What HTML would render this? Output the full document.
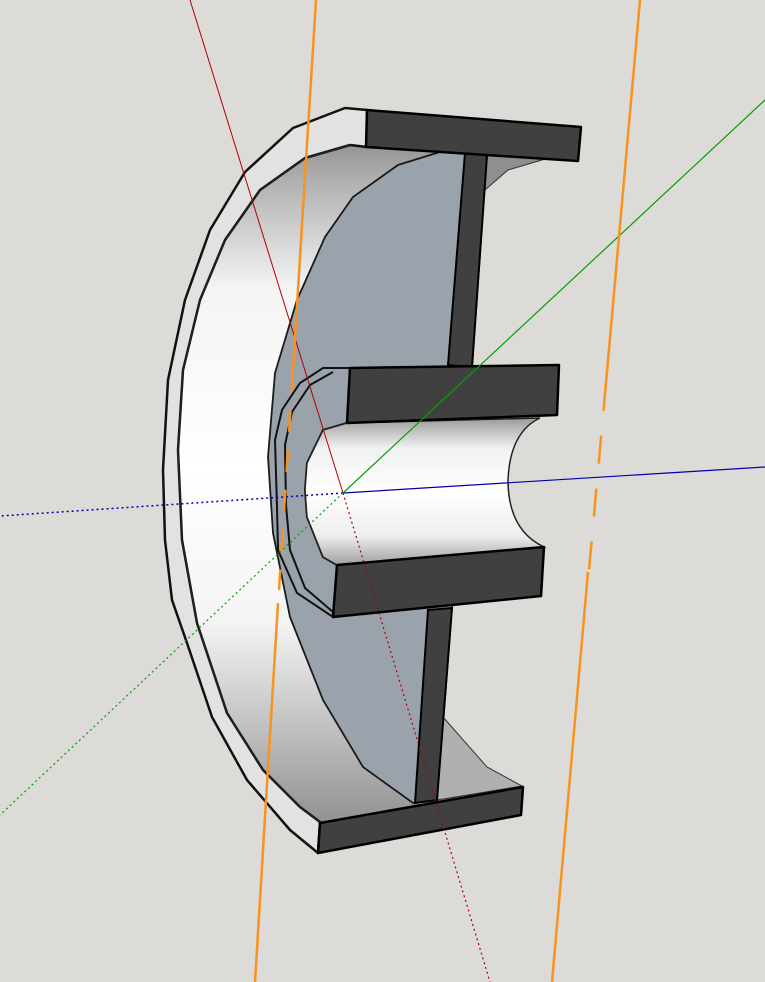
<!DOCTYPE html>
<html><head><meta charset="utf-8"><style>html,body{margin:0;padding:0;background:#dcdbd7}svg{display:block}</style></head>
<body>
<svg width="765" height="982" viewBox="0 0 765 982" xmlns="http://www.w3.org/2000/svg">
<defs>
<linearGradient id="rim" x1="0" y1="0" x2="0" y2="1">
<stop offset="0" stop-color="#7a7a7a"/><stop offset="0.1" stop-color="#b0b0b0"/><stop offset="0.25" stop-color="#f4f4f4"/><stop offset="0.5" stop-color="#ffffff"/><stop offset="0.72" stop-color="#f4f4f4"/><stop offset="0.88" stop-color="#bcbcbc"/><stop offset="1" stop-color="#929292"/>
</linearGradient>
<linearGradient id="cyl" x1="0" y1="0" x2="0" y2="1">
<stop offset="0" stop-color="#9a9a9a"/><stop offset="0.2" stop-color="#f0f0f0"/><stop offset="0.5" stop-color="#ffffff"/><stop offset="0.8" stop-color="#eeeeee"/><stop offset="1" stop-color="#a0a0a0"/>
</linearGradient>
</defs>
<rect width="765" height="982" fill="#dcdbd7"/>
<path d="M350,145 L305,158 L260,190 L225,240 L200,300 L183,370 L178,450 L182,540 L197,623 L227,713 L263,770 L300,807 L320,822 L523,787 L487,767 L443,717 L440,160 L550,160 L580,128 L367,110 Z" fill="url(#rim)"/>
<path d="M345,108 L293,128 L245,172 L210,230 L185,300 L168,380 L163,470 L165,540 L172,600 L187,643 L212,717 L247,780 L290,830 L318,853 L320,822 L300,807 L263,770 L227,713 L197,623 L182,540 L178,450 L183,370 L200,300 L225,240 L260,190 L305,158 L350,145 L367,147 L367,110 Z" fill="#e2e2e2" stroke="#111" stroke-width="2.5" stroke-linejoin="round"/>
<path d="M350,145 L305,158 L260,190 L225,240 L200,300 L183,370 L178,450 L182,540 L197,623 L227,713 L263,770 L300,807 L320,822" fill="none" stroke="#222" stroke-width="1.5"/>
<path d="M487,155 L552,157 L508,170 L485,190 Z" fill="#8f8f8f" stroke="#333" stroke-width="1"/>
<path d="M440,152 L398,165 L353,197 L325,237 L297,300 L275,373 L268,457 L273,533 L290,617 L323,700 L363,767 L413,803 L437,800 L452,608 L472,367 L487,155 Z" fill="#9aa3ab" stroke="#1a1a1a" stroke-width="1.8"/>
<path d="M443,717 L487,767 L522,786 L437,800 Z" fill="#b0b0b0" stroke="#333" stroke-width="1"/>
<path d="M350,368 L323,368 L300,383 L282,410 L275,440 L277,507 L278,550 L297,593 L333,617 L337,565 L323,557 L307,517 L305,490 L307,463 L323,430 L347,423 Z" fill="#9aa3ab" stroke="#111" stroke-width="2"/>
<path d="M333,372 L310,385 L292,412 L285,445 L286,505 L290,550 L305,588 L333,612" fill="none" stroke="#111" stroke-width="2"/>
<path d="M347,423 L323,430 L307,463 L305,490 L307,517 L323,557 L337,565 L544,547 Q508,530 508,480 Q510,432 540,418 Z" fill="url(#cyl)" stroke="#222" stroke-width="1.5"/>
<path d="M465,153 L487,155 L472,367 L448,365 Z" fill="#404040" stroke="#000" stroke-width="2"/>
<path d="M428,610 L452,608 L437,800 L415,803 Z" fill="#404040" stroke="#000" stroke-width="2"/>
<path d="M367,110 L581,127 L578,161 L366,147 Z" fill="#404040" stroke="#000" stroke-width="2.5" stroke-linejoin="round"/>
<path d="M350,368 L559,365 L557,415 L347,423 Z" fill="#404040" stroke="#000" stroke-width="2.5" stroke-linejoin="round"/>
<path d="M337,565 L544,547 L541,596 L333,617 Z" fill="#404040" stroke="#000" stroke-width="2.5" stroke-linejoin="round"/>
<path d="M320,823 L523,787 L521,815 L318,853 Z" fill="#404040" stroke="#000" stroke-width="2.5" stroke-linejoin="round"/>
<line x1="190" y1="0" x2="343" y2="493" stroke="#b00000" stroke-width="1"/>
<line x1="343" y1="493" x2="490" y2="982" stroke="#b00000" stroke-width="1.2" stroke-dasharray="2,3"/>
<line x1="343" y1="493" x2="765" y2="467" stroke="#0000b0" stroke-width="1.2"/>
<line x1="343" y1="493" x2="0" y2="516" stroke="#0000b0" stroke-width="1.5" stroke-dasharray="2,3"/>
<line x1="343" y1="493" x2="765" y2="100" stroke="#00a000" stroke-width="1.2"/>
<line x1="343" y1="493" x2="0" y2="815" stroke="#00a000" stroke-width="1.2" stroke-dasharray="2,3"/>
<line x1="316" y1="0" x2="293" y2="370" stroke="#f7931e" stroke-width="2.5"/>
<line x1="293" y1="370" x2="279" y2="590" stroke="#f7931e" stroke-width="2.5" stroke-dasharray="22,18"/>
<line x1="278" y1="603" x2="255" y2="982" stroke="#f7931e" stroke-width="2.5"/>
<line x1="640" y1="0" x2="606" y2="383" stroke="#f7931e" stroke-width="2.5"/>
<line x1="606" y1="383" x2="589" y2="570" stroke="#f7931e" stroke-width="2.5" stroke-dasharray="28,25"/>
<line x1="588" y1="572" x2="552" y2="982" stroke="#f7931e" stroke-width="2.5"/>
</svg>
</body></html>
